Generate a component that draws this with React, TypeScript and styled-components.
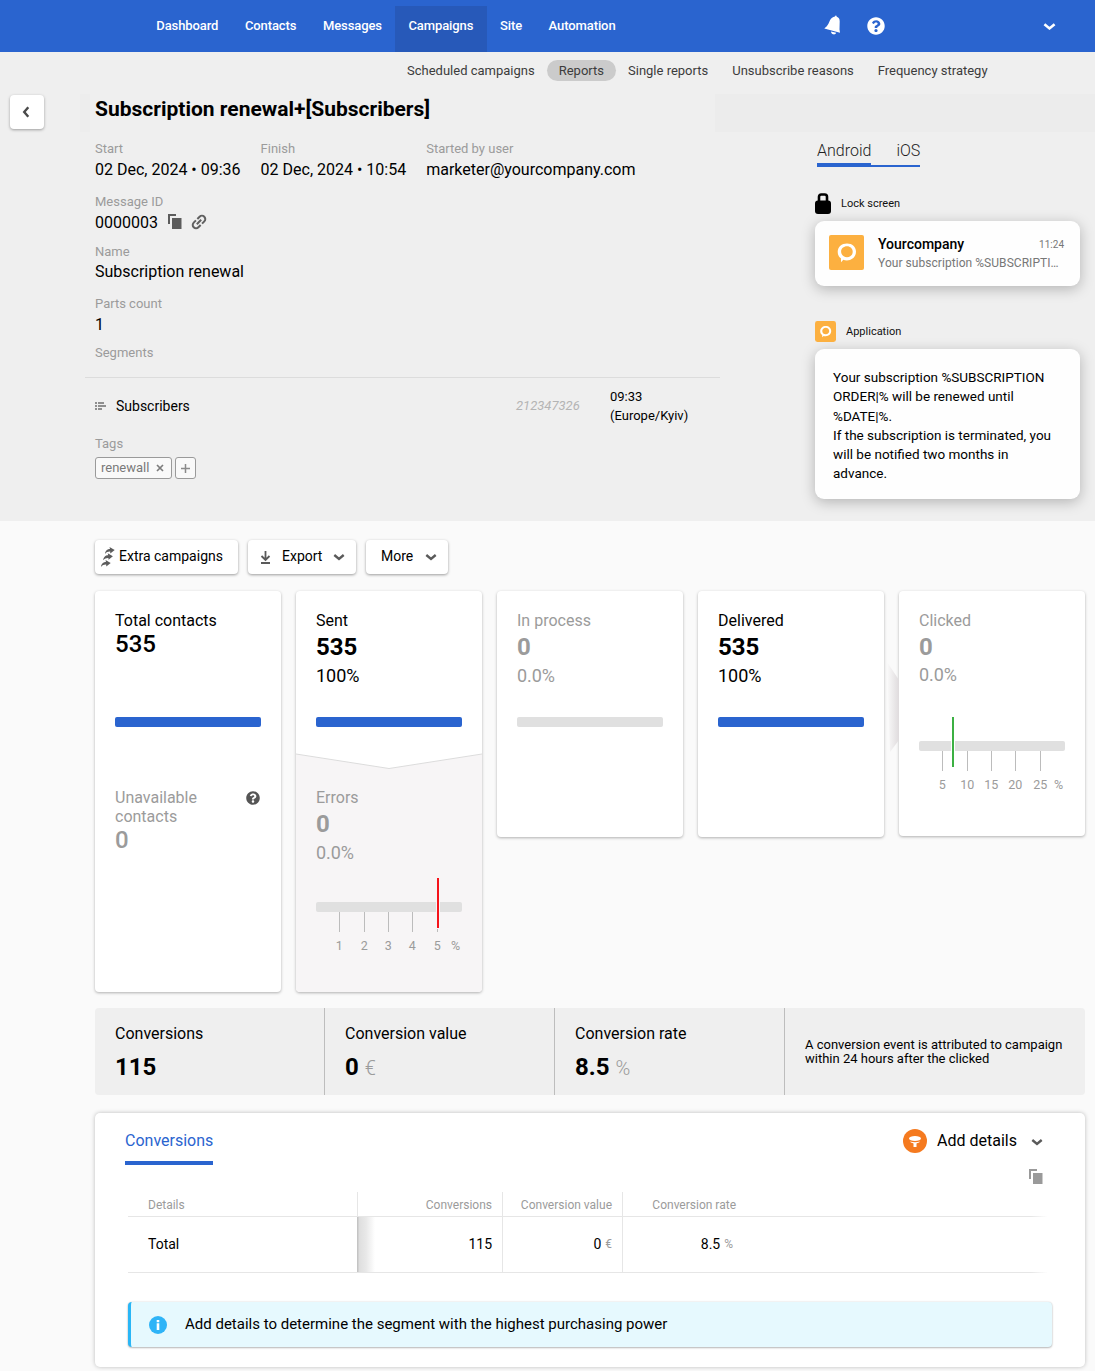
import React from "react";
import styled, { createGlobalStyle } from "styled-components";
import { FaQuestionCircle } from "react-icons/fa";

const blue = "#2a64cf";

const GlobalStyle = createGlobalStyle`
  * { box-sizing: border-box; }
  body {
    margin: 0;
    background: #fafafa;
    color: #000;
    font-family: Roboto, "Liberation Sans", sans-serif;
    font-size: 14px;
  }
  svg { display: block; flex: none; }
`;

const Page = styled.div`
  width: 1095px;
  height: 1371px;
  overflow: hidden;
`;

/* ---------- top bar ---------- */

const TopBar = styled.header`
  display: flex;
  height: 52px;
  padding-left: 143px;
  background: ${blue};
`;

const NavItem = styled.a<{ $active?: boolean }>`
  height: 46px;
  margin-top: 6px;
  padding: 0 13.3px;
  line-height: 39px;
  font-size: 13px;
  font-weight: 500;
  letter-spacing: -0.1px;
  color: #fff;
  background: ${(p) => (p.$active ? "#2759b9" : "transparent")};
`;

const TopIcons = styled.div`
  display: flex;
  align-items: center;
  margin-left: auto;
  padding-right: 39px;
  color: #fff;
`;

const IconSlot = styled.span<{ $left?: number; $right?: number; $top?: number }>`
  display: flex;
  margin-left: ${(p) => p.$left ?? 0}px;
  margin-right: ${(p) => p.$right ?? 0}px;
  margin-top: ${(p) => p.$top ?? 0}px;
`;

/* ---------- campaign summary ---------- */

const Hero = styled.section`
  height: 469px;
  background: #efefef;
`;

const SubNav = styled.nav`
  display: flex;
  height: 42px;
  padding: 8px 0 0 395px;
`;

const SubNavItem = styled.a<{ $active?: boolean }>`
  height: 21px;
  padding: 0 12px;
  border-radius: 11px;
  line-height: 22px;
  font-size: 13px;
  color: #3c3c3c;
  background: ${(p) => (p.$active ? "#cbcbcb" : "transparent")};
`;

const HeroBody = styled.div`
  display: flex;
`;

const BackButton = styled.button`
  display: flex;
  align-items: center;
  justify-content: center;
  width: 34px;
  height: 34px;
  margin: 1px 36px 0 10px;
  padding: 0 3px 0 0;
  border: 0;
  border-radius: 4px;
  background: #fff;
  box-shadow: 0 1px 3px rgba(0, 0, 0, 0.35);
`;

const HeroMain = styled.div`
  flex: 1;
`;

const TitleRow = styled.div`
  height: 38px;
  padding-left: 15px;
  background: linear-gradient(90deg, #ededed 10px, #efefef 10px, #efefef 635px, #ececec 635px);
`;

const Title = styled.h1`
  margin: 0;
  line-height: 30px;
  font-size: 21px;
  font-weight: 700;
  color: #000;
`;

const HeroColumns = styled.div`
  display: flex;
`;

const Details = styled.div`
  width: 640px;
  padding: 7px 0 0 15px;
`;

const FieldRow = styled.div`
  display: flex;
  gap: 20px;
`;

const Field = styled.div<{ $top?: number; $gap?: number }>`
  margin-top: ${(p) => p.$top ?? 0}px;
  display: flex;
  flex-direction: column;
  gap: ${(p) => p.$gap ?? 1}px;
`;

const FieldLabel = styled.div`
  line-height: 20px;
  font-size: 13px;
  color: #9b9b9b;
`;

const FieldValue = styled.div`
  display: flex;
  align-items: center;
  height: 20px;
  line-height: 20px;
  font-size: 16px;
  white-space: nowrap;
`;

const SegmentRow = styled.div`
  display: flex;
  align-items: center;
  height: 57px;
  margin: 14px 0 0 -10px;
  padding-left: 10px;
  width: 635px;
  border-top: 1px solid #dcdcdc;
`;

const SegmentName = styled.span`
  width: 400px;
  margin-left: 10px;
  font-size: 14px;
`;

const SegmentId = styled.span`
  width: 94px;
  padding-bottom: 2px;
  font-size: 13px;
  font-style: italic;
  color: #b4b4b4;
`;

const SegmentTime = styled.span`
  font-size: 13px;
  line-height: 19px;
`;

const TagList = styled.div`
  display: flex;
  gap: 3px;
`;

const Tag = styled.span`
  display: flex;
  align-items: center;
  justify-content: center;
  gap: 7px;
  height: 22px;
  padding: 0 7px 0 5px;
  border: 1px solid #9a9a9a;
  border-radius: 3px;
  background: #f9f9f9;
  font-size: 13px;
  line-height: 18px;
  color: #7a7a7a;
`;

const TagAdd = styled(Tag)`
  width: 21px;
  padding: 0;
`;

/* ---------- push preview ---------- */

const Preview = styled.aside`
  width: 265px;
  margin-left: 95px;
  padding-top: 7px;
`;

const PlatformTabs = styled.div`
  display: flex;
  height: 28px;
  margin-left: 2px;
`;

const PlatformTab = styled.span<{ $active?: boolean }>`
  padding-left: ${(p) => (p.$active ? 0 : 25)}px;
  line-height: 24px;
  font-size: 16px;
  font-weight: 300;
  color: #222;
  box-shadow: inset 0 ${(p) => (p.$active ? -4 : -2)}px 0 ${blue};
`;

const PreviewLabel = styled.div<{ $top: number; $gap: number }>`
  display: flex;
  align-items: center;
  gap: ${(p) => p.$gap}px;
  height: 21px;
  margin: ${(p) => p.$top}px 0 7px;
  font-size: 11px;
  color: #111;
`;

const PreviewText = styled.span`
  line-height: 20px;
`;

const PreviewCard = styled.div`
  border-radius: 9px;
  background: #fefefe;
  box-shadow: 0 3px 14px rgba(0, 0, 0, 0.25);
`;

const LockCard = styled(PreviewCard)`
  display: flex;
  height: 65px;
  padding: 14px 16px 0 14px;
  gap: 14px;
`;

const LockContent = styled.div`
  flex: 1;
`;

const LockHead = styled.div`
  display: flex;
  justify-content: space-between;
  align-items: center;
  height: 18px;
  margin-bottom: 1px;
  font-size: 14px;
  font-weight: 500;
`;

const LockTime = styled.span`
  font-size: 10px;
  font-weight: 400;
  color: #777;
`;

const LockText = styled.div`
  line-height: 19px;
  font-size: 12px;
  letter-spacing: 0.05px;
  color: #777;
  white-space: nowrap;
`;

const MessageCard = styled(PreviewCard)`
  height: 150px;
  padding: 19px 18px;
  font-size: 13.5px;
  line-height: 19.3px;
  white-space: pre;
`;

/* ---------- report ---------- */

const Report = styled.main`
  padding: 19px 10px 0 95px;
`;

const Actions = styled.div`
  display: flex;
  gap: 10px;
`;

const ActionButton = styled.button<{ $width: number; $left: number }>`
  display: flex;
  align-items: center;
  width: ${(p) => p.$width}px;
  height: 34px;
  padding: 0 0 0 ${(p) => p.$left}px;
  border: 0;
  border-radius: 4px;
  background: #fff;
  box-shadow: 0 1px 3px rgba(0, 0, 0, 0.38);
  font: 14px Roboto, "Liberation Sans", sans-serif;
  color: #000;
  white-space: nowrap;
`;

const ActionText = styled.span<{ $left: number; $right: number }>`
  margin: 0 ${(p) => p.$right}px 0 ${(p) => p.$left}px;
  padding-bottom: 2px;
  line-height: 20px;
`;

const Cards = styled.div`
  display: flex;
  align-items: flex-start;
  gap: 15px;
  margin-top: 17px;
`;

const Card = styled.div<{ $height: number }>`
  position: relative;
  width: 186px;
  height: ${(p) => p.$height}px;
  border-radius: 4px;
  background: #fff;
  box-shadow: 0 1px 3px rgba(0, 0, 0, 0.3);
`;

const Metric = styled.div<{ $muted?: boolean; $height?: number; $top?: number }>`
  height: ${(p) => p.$height ?? 126}px;
  padding: ${(p) => p.$top ?? 20}px 20px 0;
  color: ${(p) => (p.$muted ? "#9b9b9b" : "#000")};
`;

const MetricHead = styled.div`
  display: flex;
  justify-content: space-between;
  line-height: 19px;
  font-size: 16px;
`;

const MetricNumber = styled.div<{ $total?: boolean }>`
  margin-top: ${(p) => (p.$total ? 0 : 3)}px;
  line-height: 28px;
  font-size: 24px;
  font-weight: ${(p) => (p.$total ? 500 : 700)};
`;

const MetricShare = styled.div<{ $gap?: number }>`
  margin-top: ${(p) => p.$gap ?? 3}px;
  line-height: 24px;
  font-size: 18px;
  letter-spacing: -0.05px;
`;

const Bar = styled.div<{ $filled?: boolean }>`
  width: 146px;
  height: 10px;
  margin: 0 20px;
  border-radius: 2px;
  background: ${(p) => (p.$filled ? blue : "#e0e0e0")};
`;

const UnavailableBlock = styled.div`
  padding-top: 41px;
`;

const GaugeSlot = styled.div`
  margin: 0 18px 0 20px;
`;

const Notch = styled.svg`
  margin-top: 26px;
`;

const ErrorBlock = styled.div`
  height: 223px;
  border-radius: 0 0 4px 4px;
  background: #f7f5f6;
`;

const FlowArrow = styled.svg`
  position: absolute;
  left: -12px;
  top: 71px;
`;

/* ---------- conversions ---------- */

const Strip = styled.div`
  display: flex;
  height: 87px;
  margin-top: 16px;
  border-radius: 4px;
  background: #efefef;
`;

const StripCell = styled.div`
  width: 230px;
  padding: 16px 20px 0;
  border-right: 1px solid #bdbdbd;
`;

const StripLabel = styled.div`
  line-height: 20px;
  font-size: 16px;
`;

const StripValue = styled.div`
  margin-top: 9px;
  line-height: 28px;
  font-size: 24px;
  font-weight: 700;
`;

const Unit = styled.span`
  margin-left: 6px;
  font-size: 20px;
  font-weight: 300;
  color: #9b9b9b;
`;

const StripNote = styled.div`
  padding: 30px 0 0 20px;
  line-height: 14px;
  font-size: 13px;
  white-space: nowrap;
`;

const Panel = styled.section`
  height: 254px;
  margin-top: 18px;
  padding: 16px 33px 0 33px;
  border-radius: 5px;
  background: #fff;
  box-shadow: 0 0 4px rgba(0, 0, 0, 0.25);
`;

const PanelHead = styled.div`
  display: flex;
  justify-content: space-between;
  height: 36px;
  margin: 0 9px 0 -3px;
`;

const PanelTab = styled.span`
  line-height: 24px;
  font-size: 16px;
  color: ${blue};
  border-bottom: 4px solid ${blue};
`;

const AddDetails = styled.div`
  display: flex;
  align-items: center;
  height: 24px;
  gap: 10px;
  font-size: 16px;
`;

const AddDetailsText = styled.span`
  padding-bottom: 2px;
`;

const CopyRow = styled.div`
  display: flex;
  justify-content: flex-end;
  height: 27px;
  padding: 4px 9px 0 0;
`;

const Table = styled.div`
  width: 919px;
  display: grid;
  grid-template-columns: 230px 145px 120px 1fr;
  grid-template-rows: 25px 56px;
`;

const Cell = styled.div<{ $head?: boolean; $right?: number; $last?: boolean }>`
  display: flex;
  align-items: center;
  justify-content: ${(p) => (p.$right === undefined ? "flex-start" : "flex-end")};
  padding: ${(p) => (p.$head ? "2px" : "0")} ${(p) => p.$right ?? 0}px ${(p) => (p.$head ? 0 : 1)}px
    ${(p) => (p.$right === undefined ? 20 : 0)}px;
  border-right: ${(p) => (p.$last ? "0" : "1px solid #e6e6e6")};
  border-bottom: 1px solid #e6e6e6;
  ${(p) => p.$last && "border-image: linear-gradient(90deg, #e6e6e6 96%, #fff) 1;"}
  font-size: ${(p) => (p.$head ? 12 : 14)}px;
  white-space: nowrap;
  color: ${(p) => (p.$head ? "#9b9b9b" : "#000")};
`;

const ShadedCell = styled(Cell)`
  margin-left: -1px;
  background: linear-gradient(90deg, #c4c4c4 1px, #dedede 2px, #e8e8e8 9px, #fff 18px);
`;

const CellUnit = styled.span`
  margin-left: 4px;
  font-size: 12px;
  color: #9b9b9b;
`;

const Notice = styled.div`
  display: flex;
  align-items: center;
  height: 45px;
  margin-top: 29px;
  padding-left: 18px;
  gap: 18px;
  border-left: 3px solid #29b6f6;
  border-radius: 4px;
  background: #e6f9fe;
  box-shadow: 0 0 2px rgba(0, 0, 0, 0.15), 0 1px 2px rgba(0, 0, 0, 0.25);
  font-size: 15px;
`;

const NoticeText = styled.span`
  line-height: 20px;
  padding-bottom: 2px;
`;

/* ---------- icons ---------- */

const Chevron = ({ color = "#5a5a5a", size = 12 }: { color?: string; size?: number }) => (
  <svg width={size} height={(size * 8) / 12} viewBox="0 0 12 8">
    <path d="M1.3 2 6 5.900l4.700-3.900" fill="none" stroke={color} strokeWidth="2.400" />
  </svg>
);

const BackIcon = () => (
  <svg width="8" height="12" viewBox="0 0 8 12">
    <path d="M6.300 1.200 2.200 6l4.100 4.800" fill="none" stroke="#4a4a4a" strokeWidth="2.400" />
  </svg>
);

const BellIcon = () => (
  <svg width="17" height="20" viewBox="0 0 17 20" fill="#fff">
    <path d="M11.600 .4c.8 0 1.200.6 1.100 1.300C15 2.600 15.700 4 15.700 6.500L15.500 14.500l.5 3.300L.3 13.400l2.500-2.200C4.500 9.500 4.800 7.600 6 5.300 7.200 3 8.800 1.700 10.900 1.400z" />
    <path d="M7 16.500l5.200 1.300c-.6 1.300-1.700 1.800-3 1.500S7 18 7 16.500z" />
  </svg>
);

const CopyIcon = ({ color }: { color: string }) => (
  <svg width="14" height="15" viewBox="0 0 14 15" fill={color}>
    <path d="M0 0h8v2H2v8H0z" />
    <path d="M4 4h9.500v11H4z" />
  </svg>
);

const LinkIcon = () => (
  <svg width="20" height="20" viewBox="0 0 24 24">
    <g transform="rotate(-45 12 12)" fill="none" stroke="#606060" strokeWidth="2.400">
      <path d="M10.800 8H7a4 4 0 0 0 0 8h3.800" />
      <path d="M13.200 8H17a4 4 0 0 1 0 8h-3.800" />
      <path d="M8.300 12h7.400" />
    </g>
  </svg>
);

const LockIcon = () => (
  <svg width="16" height="21" viewBox="0 0 16 21">
    <path d="M4 9V3.800Q4 1.500 6.300 1.500h3.400Q12 1.500 12 3.800V9" fill="none" stroke="#000" strokeWidth="2.600" />
    <rect y="7.500" width="16" height="13.500" rx="3" />
  </svg>
);

const BrandIcon = ({ size }: { size: number }) => (
  <svg width={size} height={size} viewBox="0 0 35 35">
    <rect width="35" height="35" rx={size > 30 ? 2 : 4} fill="#fcb040" />
    <path
      fill="#fff"
      fillRule="evenodd"
      d="M18 8.500c5.200 0 9 3.500 9 8.300s-3.900 8.600-9.200 8.600c-1.300 0-2.500-.2-3.500-.6l-2.200 2.400-.2-3.900c-2.100-1.500-3.200-3.800-3.200-6.400 0-4.900 4-8.400 9.300-8.400zM18 11.200c-3.400 0-5.900 2.300-5.900 5.400s2.400 5.600 5.900 5.600 5.700-2.400 5.700-5.500-2.400-5.500-5.700-5.500z"
    />
  </svg>
);

const ListIcon = () => (
  <svg width="11" height="9" viewBox="0 0 11 9" fill="#8e8e8e">
    <path d="M0 0h2v2H0zM3 0h6v2H3zM0 3h2v2H0zM3 3h8v2H3zM0 6h2v2H0zM3 6h4v2H3z" />
  </svg>
);

const ArrowsIcon = () => (
  <svg width="14" height="20" viewBox="0 0 14 20" fill="#5c5c5c">
    {[[4, 0], [2.2, 6.3], [0, 13]].map(([x, y]) => (
      <path
        key={y}
        transform={`translate(${x} ${y})`}
        d="M0 7C.1 4 2 1.900 5 1.900L4.500 0l5.200 3-4.400 3.500-.1-1.900C3 4.500 1.500 5.300 0 7z"
      />
    ))}
  </svg>
);

const DownloadIcon = () => (
  <svg width="11" height="13" viewBox="0 0 11 13" fill="none" stroke="#5a5a5a" strokeWidth="1.800">
    <path d="M5.500 0v8.500M1.500 5l4 4 4-4M1 12h9" />
  </svg>
);

const FunnelIcon = () => (
  <svg width="24" height="24" viewBox="0 0 24 24">
    <circle cx="12" cy="12" r="12" fill="#f57a1f" />
    <ellipse cx="12" cy="9.500" rx="6" ry="2.600" fill="#fff" />
    <path d="M7 12.600c3 .9 7 .9 10 0-.6 1-2.200 1.400-3.500 2V18h-3v-3.400C9.200 14 7.600 13.600 7 12.600z" fill="#fff" />
  </svg>
);

const InfoIcon = () => (
  <svg width="18" height="18" viewBox="0 0 18 18">
    <circle cx="9" cy="9" r="9" fill="#2fb4f7" />
    <path d="M7.700 4h2.600v2.200H7.700zM7.700 7.300h2.600V14H7.700z" fill="#fff" />
  </svg>
);

const CrossIcon = () => (
  <svg width="8" height="8" viewBox="0 0 8 8">
    <path d="M1 1l6 6M7 1 1 7" stroke="#7d7d7d" strokeWidth="1.700" />
  </svg>
);

const PlusIcon = () => (
  <svg width="9" height="9" viewBox="0 0 9 9">
    <path d="M0 4.500h9M4.500 0v9" stroke="#8a8a8a" strokeWidth="1.500" />
  </svg>
);

type GaugeProps = { labels: string[]; marker: number; color: string; halo: string };

const Gauge = ({ labels, marker, color, halo }: GaugeProps) => (
  <svg width="148" height="76" viewBox="0 0 148 76">
    <rect y="24" width="146" height="10" rx="2" fill="#e0e0e0" />
    {labels.map((label, i) => {
      const x = [23, 48, 72, 96, 121][i];
      return (
        <React.Fragment key={label}>
          <rect x={x} y="34" width="1" height="20" fill="#bcbcbc" />
          <text x={x + 0.2} y="72" textAnchor="middle" fontSize="12.5" fill="#9b9b9b">
            {label}
          </text>
        </React.Fragment>
      );
    })}
    <text x="139.5" y="72" textAnchor="middle" fontSize="12.5" fill="#9b9b9b">%</text>
    <rect x={marker - 1} width="4" height="51" fill={halo} />
    <rect x={marker} width="2" height="50" fill={color} />
  </svg>
);

/* ---------- page ---------- */

const navItems = ["Dashboard", "Contacts", "Messages", "Campaigns", "Site", "Automation"];
const subItems = ["Scheduled campaigns", "Reports", "Single reports", "Unsubscribe reasons", "Frequency strategy"];

const message = `Your subscription %SUBSCRIPTION
ORDER|% will be renewed until
%DATE|%.
If the subscription is terminated, you
will be notified two months in
advance.`;

type StatProps = {
  label: string;
  value: string;
  share: string;
  muted?: boolean;
  height?: number;
  top?: number;
  shareGap?: number;
};

const Stat = ({ label, value, share, muted, height, top, shareGap }: StatProps) => (
  <Metric $muted={muted} $height={height} $top={top}>
    <MetricHead>{label}</MetricHead>
    <MetricNumber>{value}</MetricNumber>
    <MetricShare $gap={shareGap}>{share}</MetricShare>
  </Metric>
);

export default function App() {
  return (
    <Page>
      <GlobalStyle />
      <TopBar>
        {navItems.map((item) => (
          <NavItem key={item} $active={item === "Campaigns"}>{item}</NavItem>
        ))}
        <TopIcons>
          <IconSlot $top={-3}><BellIcon /></IconSlot>
          <IconSlot $left={26}><FaQuestionCircle size={18} /></IconSlot>
          <IconSlot $left={158}><Chevron color="#fff" size={13} /></IconSlot>
        </TopIcons>
      </TopBar>

      <Hero>
        <SubNav>
          {subItems.map((item) => (
            <SubNavItem key={item} $active={item === "Reports"}>{item}</SubNavItem>
          ))}
        </SubNav>
        <HeroBody>
          <BackButton><BackIcon /></BackButton>
          <HeroMain>
            <TitleRow><Title>Subscription renewal+[Subscribers]</Title></TitleRow>
            <HeroColumns>
              <Details>
                <FieldRow>
                  <Field><FieldLabel>Start</FieldLabel><FieldValue>02 Dec, 2024 • 09:36</FieldValue></Field>
                  <Field><FieldLabel>Finish</FieldLabel><FieldValue>02 Dec, 2024 • 10:54</FieldValue></Field>
                  <Field><FieldLabel>Started by user</FieldLabel><FieldValue>marketer@yourcompany.com</FieldValue></Field>
                </FieldRow>
                <Field $top={12}>
                  <FieldLabel>Message ID</FieldLabel>
                  <FieldValue>
                    0000003
                    <IconSlot $left={10} $top={-3}><CopyIcon color="#5c5c5c" /></IconSlot>
                    <IconSlot $left={7} $top={-2}><LinkIcon /></IconSlot>
                  </FieldValue>
                </Field>
                <Field $top={9} $gap={0}><FieldLabel>Name</FieldLabel><FieldValue>Subscription renewal</FieldValue></Field>
                <Field $top={12}><FieldLabel>Parts count</FieldLabel><FieldValue>1</FieldValue></Field>
                <Field $top={8}><FieldLabel>Segments</FieldLabel></Field>
                <SegmentRow>
                  <ListIcon />
                  <SegmentName>Subscribers</SegmentName>
                  <SegmentId>212347326</SegmentId>
                  <SegmentTime>09:33<br />(Europe/Kyiv)</SegmentTime>
                </SegmentRow>
                <Field $gap={3}>
                  <FieldLabel>Tags</FieldLabel>
                  <TagList>
                    <Tag>renewall<CrossIcon /></Tag>
                    <TagAdd><PlusIcon /></TagAdd>
                  </TagList>
                </Field>
              </Details>

              <Preview>
                <PlatformTabs>
                  <PlatformTab $active>Android</PlatformTab>
                  <PlatformTab>iOS</PlatformTab>
                </PlatformTabs>
                <PreviewLabel $top={26} $gap={10}><LockIcon /><PreviewText>Lock screen</PreviewText></PreviewLabel>
                <LockCard>
                  <BrandIcon size={35} />
                  <LockContent>
                    <LockHead>Yourcompany<LockTime>11:24</LockTime></LockHead>
                    <LockText>Your subscription %SUBSCRIPTI…</LockText>
                  </LockContent>
                </LockCard>
                <PreviewLabel $top={35} $gap={10}><BrandIcon size={21} /><PreviewText>Application</PreviewText></PreviewLabel>
                <MessageCard>{message}</MessageCard>
              </Preview>
            </HeroColumns>
          </HeroMain>
        </HeroBody>
      </Hero>

      <Report>
        <Actions>
          <ActionButton $width={143} $left={6}>
            <ArrowsIcon /><ActionText $left={4} $right={0}>Extra campaigns</ActionText>
          </ActionButton>
          <ActionButton $width={108} $left={12}>
            <DownloadIcon /><ActionText $left={11} $right={11}>Export</ActionText><Chevron />
          </ActionButton>
          <ActionButton $width={82} $left={15}>
            <ActionText $left={0} $right={12}>More</ActionText><Chevron />
          </ActionButton>
        </Actions>

        <Cards>
          <Card $height={401}>
            <Metric>
              <MetricHead>Total contacts</MetricHead>
              <MetricNumber $total>535</MetricNumber>
            </Metric>
            <Bar $filled />
            <UnavailableBlock>
              <Metric $muted>
                <MetricHead>
                  <span>Unavailable<br />contacts</span>
                  <IconSlot $top={3} $right={1}><FaQuestionCircle size={14} color="#555" /></IconSlot>
                </MetricHead>
                <MetricNumber $total>0</MetricNumber>
              </Metric>
            </UnavailableBlock>
          </Card>

          <Card $height={401}>
            <Stat label="Sent" value="535" share="100%" />
            <Bar $filled />
            <Notch width="186" height="16" viewBox="0 0 186 16">
              <path d="M0 1 93 15.500 186 1V16H0z" fill="#f7f5f6" />
              <path d="M0 1 93 15.500 186 1" fill="none" stroke="#dcdcdc" />
            </Notch>
            <ErrorBlock>
              <Stat label="Errors" value="0" share="0.0%" muted height={109} top={19} />
              <GaugeSlot><Gauge labels={["1", "2", "3", "4", "5"]} marker={121} color="#f5141b" halo="#f7f5f6" /></GaugeSlot>
            </ErrorBlock>
          </Card>

          <Card $height={246}>
            <Stat label="In process" value="0" share="0.0%" muted />
            <Bar />
          </Card>

          <Card $height={246}>
            <Stat label="Delivered" value="535" share="100%" />
            <Bar $filled />
          </Card>

          <Card $height={245}>
            <FlowArrow width="12" height="90" viewBox="0 0 12 90">
              <defs>
                <linearGradient id="flow">
                  <stop offset="0" stopColor="#fafafa" />
                  <stop offset="1" stopColor="#dfdbdd" />
                </linearGradient>
              </defs>
              <path d="M0 0 12 18V78L3 90Z" fill="url(#flow)" />
            </FlowArrow>
            <Stat label="Clicked" value="0" share="0.0%" muted shareGap={2} />
            <GaugeSlot><Gauge labels={["5", "10", "15", "20", "25"]} marker={33} color="#3cb043" halo="#fff" /></GaugeSlot>
          </Card>
        </Cards>

        <Strip>
          <StripCell><StripLabel>Conversions</StripLabel><StripValue>115</StripValue></StripCell>
          <StripCell><StripLabel>Conversion value</StripLabel><StripValue>0<Unit>€</Unit></StripValue></StripCell>
          <StripCell><StripLabel>Conversion rate</StripLabel><StripValue>8.5<Unit>%</Unit></StripValue></StripCell>
          <StripNote>A conversion event is attributed to campaign<br />within 24 hours after the clicked</StripNote>
        </Strip>

        <Panel>
          <PanelHead>
            <PanelTab>Conversions</PanelTab>
            <AddDetails>
              <FunnelIcon />
              <AddDetailsText>Add details</AddDetailsText>
              <IconSlot $left={4} $top={2}><Chevron /></IconSlot>
            </AddDetails>
          </PanelHead>
          <CopyRow><CopyIcon color="#9a9a9a" /></CopyRow>
          <Table>
            <Cell $head>Details</Cell>
            <Cell $head $right={10}>Conversions</Cell>
            <Cell $head $right={10}>Conversion value</Cell>
            <Cell $head $last $right={311}>Conversion rate</Cell>
            <Cell>Total</Cell>
            <ShadedCell $right={10}>115</ShadedCell>
            <Cell $right={10}>0<CellUnit>€</CellUnit></Cell>
            <Cell $last $right={314}>8.5<CellUnit>%</CellUnit></Cell>
          </Table>
          <Notice><InfoIcon /><NoticeText>Add details to determine the segment with the highest purchasing power</NoticeText></Notice>
        </Panel>
      </Report>
    </Page>
  );
}
